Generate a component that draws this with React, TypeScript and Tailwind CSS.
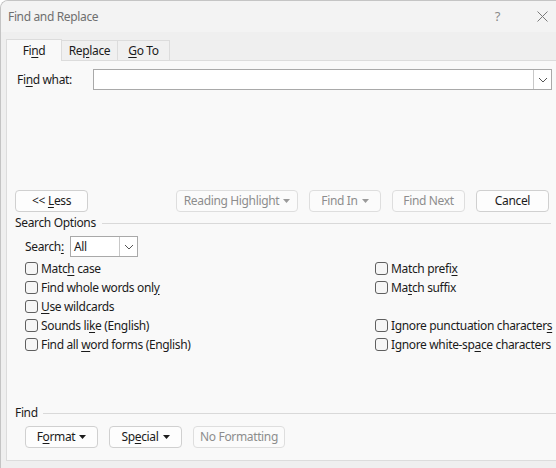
import React from 'react';

const font = { fontFamily: '"Noto Sans", "Open Sans", Arial, sans-serif' };

function Caret({ disabled }: { disabled?: boolean }) {
  return (
    <svg width="7" height="4" viewBox="0 0 7 4" className="ml-[4px]">
      <path d="M0 0 L7 0 L3.5 4 Z" fill={disabled ? '#9a9a9a' : '#1b1b1b'} />
    </svg>
  );
}

function Chevron() {
  return (
    <svg width="10" height="6" viewBox="0 0 10 6">
      <path d="M1 1 L5 5 L9 1" fill="none" stroke="#555" strokeWidth="1" />
    </svg>
  );
}

function Btn({
  children,
  w,
  disabled,
}: {
  children: React.ReactNode;
  w: string;
  disabled?: boolean;
}) {
  return (
    <button
      className={`${w} h-[22px] flex items-center justify-center rounded-[4px] border text-[12px] ${
        disabled
          ? 'border-[#dedede] bg-[#fbfbfb] text-[#8d8d8d]'
          : 'border-[#d0d0d0] bg-[#fdfdfd] text-[#1b1b1b]'
      }`}
    >
      {children}
    </button>
  );
}

function Check({ children }: { children: React.ReactNode }) {
  return (
    <div className="h-[19px] flex items-center">
      <span className="w-[13px] h-[13px] rounded-[3px] border border-[#5f5f5f] bg-[#f6f6f6]" />
      <span className="ml-[3px] text-[12px] text-[#1b1b1b] whitespace-nowrap">{children}</span>
    </div>
  );
}

export default function App() {
  return (
    <div
      className="w-[556px] h-[468px] bg-[#efefef] border-l border-t border-[#c4c4c4] rounded-tl-[8px] overflow-hidden flex flex-col tracking-[-0.35px]"
      style={font}
    >
      {/* title bar */}
      <div className="h-[31px] bg-[#f3f3f3] flex items-center pl-[7px] text-[12px] text-[#6f6f6f] shrink-0">
        <span>Find and Replace</span>
        <span className="ml-auto mr-[37px] text-[13px] text-[#8a8a8a]">?</span>
        <svg width="11" height="11" viewBox="0 0 11 11" className="mr-[8px]">
          <path d="M0.5 0.5 L10.5 10.5 M10.5 0.5 L0.5 10.5" stroke="#7a7a7a" strokeWidth="1" />
        </svg>
      </div>

      {/* tabs */}
      <div className="h-[28px] flex items-end pl-[5px] shrink-0">
        <div className="h-[22px] w-[56px] bg-[#f9f9f9] border border-b-0 border-[#dcdcdc] flex items-center justify-center text-[12px] text-[#1b1b1b] relative top-[1px] z-10">
          Fi<u className="underline-offset-2">n</u>d
        </div>
        <div className="h-[20px] w-[56px] bg-[#f0f0f0] border border-b-0 border-l-0 border-[#dcdcdc] flex items-center justify-center text-[12px] text-[#1b1b1b]">
          Re<u className="underline-offset-2">p</u>lace
        </div>
        <div className="h-[20px] w-[52px] bg-[#f0f0f0] border border-b-0 border-l-0 border-[#dcdcdc] flex items-center justify-center text-[12px] text-[#1b1b1b]">
          <u className="underline-offset-2">G</u>o To
        </div>
      </div>

      {/* panel */}
      <div className="ml-[5px] w-[551px] h-[401px] bg-[#f9f9f9] border border-[#dcdcdc] pl-[8px] flex flex-col shrink-0 text-[#1b1b1b] text-[12px]">
        <div className="mt-[8px] h-[21px] flex items-center">
          <span className="ml-[2px] w-[76px]">
            Fi<u className="underline-offset-2">n</u>d what:
          </span>
          <div className="w-[459px] h-[21px] bg-white border border-[#a9a9a9] flex justify-end">
            <div className="w-[18px] h-full border-l border-[#c8c8c8] flex items-center justify-center">
              <Chevron />
            </div>
          </div>
        </div>

        <div className="mt-[100px] flex items-center">
          <Btn w="w-[73px]">
            &lt;&lt; <u className="ml-[3px] underline-offset-2">L</u>ess
          </Btn>
          <div className="ml-[88px] flex gap-[11px]">
            <Btn w="w-[122px]" disabled>
              Reading Highlight
              <Caret disabled />
            </Btn>
            <Btn w="w-[72px]" disabled>
              Find In
              <Caret disabled />
            </Btn>
            <Btn w="w-[73px]" disabled>
              Find Next
            </Btn>
            <Btn w="w-[73px]">Cancel</Btn>
          </div>
        </div>

        <div className="mt-[3px] h-[16px] flex items-center">
          <span>Search Options</span>
          <div className="ml-[6px] w-[449px] h-px bg-[#d9d9d9]" />
        </div>

        <div className="mt-[5px] h-[21px] flex items-center ml-[10px]">
          <span className="w-[45px]">
            Search<u className="underline-offset-2">:</u>
          </span>
          <div className="w-[68px] h-[21px] bg-white border border-[#a9a9a9] flex items-center">
            <span className="ml-[3px] flex-1">All</span>
            <div className="w-[18px] h-full border-l border-[#c8c8c8] flex items-center justify-center">
              <Chevron />
            </div>
          </div>
        </div>

        <div className="mt-[2px] ml-[10px] grid grid-cols-[350px_1fr]">
          <div className="flex flex-col">
            <Check>
              Matc<u className="underline-offset-2">h</u> case
            </Check>
            <Check>
              Find whole words onl<u className="underline-offset-2">y</u>
            </Check>
            <Check>
              <u className="underline-offset-2">U</u>se wildcards
            </Check>
            <Check>
              Sounds li<u className="underline-offset-2">k</u>e (English)
            </Check>
            <Check>
              Find all <u className="underline-offset-2">w</u>ord forms (English)
            </Check>
          </div>
          <div className="flex flex-col">
            <Check>
              Match prefi<u className="underline-offset-2">x</u>
            </Check>
            <Check>
              Ma<u className="underline-offset-2">t</u>ch suffix
            </Check>
            <div className="h-[19px]" />
            <Check>
              Ignore punctuation character<u className="underline-offset-2">s</u>
            </Check>
            <Check>
              Ignore white-sp<u className="underline-offset-2">a</u>ce characters
            </Check>
          </div>
        </div>

        <div className="mt-[51px] h-[16px] flex items-center">
          <span>Find</span>
          <div className="ml-[5px] flex-1 h-px bg-[#d9d9d9]" />
        </div>

        <div className="mt-[5px] ml-[10px] flex items-center gap-[11px]">
          <Btn w="w-[73px]">
            F<u className="underline-offset-2">o</u>rmat
            <Caret />
          </Btn>
          <Btn w="w-[73px]">
            Sp<u className="underline-offset-2">e</u>cial
            <Caret />
          </Btn>
          <Btn w="w-[92px]" disabled>
            No Formatting
          </Btn>
        </div>
      </div>
    </div>
  );
}
